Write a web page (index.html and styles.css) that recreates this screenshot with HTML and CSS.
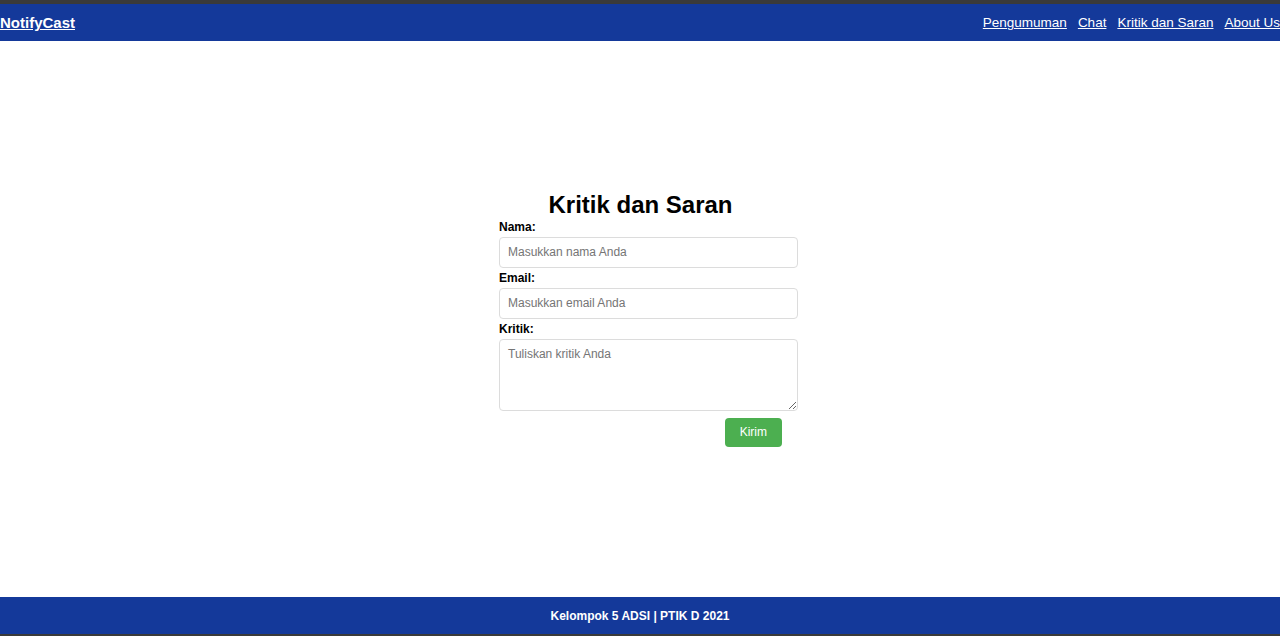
FILE: index.html
```html
<!DOCTYPE html>
<html lang="id">
<head>
<meta charset="utf-8">
<title>Kritik dan Saran - NotifyCast</title>
<link rel="stylesheet" href="styles.css">
</head>
<body>
<div class="page">
  <header class="topbar">
    <a class="brand" href="#">NotifyCast</a>
    <nav class="nav">
      <a href="#">Pengumuman</a>
      <a href="#">Chat</a>
      <a href="#">Kritik dan Saran</a>
      <a href="#">About Us</a>
    </nav>
  </header>
  <main class="main">
    <div class="form-wrap">
      <h2 class="title">Kritik dan Saran</h2>
      <form class="form">
        <label for="nama">Nama:</label>
        <input id="nama" type="text" placeholder="Masukkan nama Anda">
        <label for="email">Email:</label>
        <input id="email" type="email" placeholder="Masukkan email Anda">
        <label for="kritik">Kritik:</label>
        <textarea id="kritik" placeholder="Tuliskan kritik Anda"></textarea>
        <div class="actions"><button type="button" class="btn">Kirim</button></div>
      </form>
    </div>
  </main>
  <footer class="footer">Kelompok 5 ADSI | PTIK D 2021</footer>
</div>
</body>
</html>
```
FILE: styles.css
```css
html, body {
  margin: 0;
  padding: 0;
  height: 100%;
}
body {
  font-family: "Liberation Sans", Arial, sans-serif;
  background: #3a3a3a;
}
.page {
  box-sizing: border-box;
  height: 636px;
  padding-top: 4px;
  padding-bottom: 2px;
  display: flex;
  flex-direction: column;
  overflow: hidden;
}
.topbar {
  height: 37px;
  background: #14399a;
  display: flex;
  align-items: center;
  justify-content: space-between;
  flex-shrink: 0;
}
.brand {
  color: #fff;
  font-weight: bold;
  font-size: 15px;
}
.nav {
  display: flex;
  gap: 11px;
  margin-right: 0;
}
.nav a {
  color: #fff;
  font-size: 13.5px;
}
.main {
  flex: 1;
  background: #fff;
  display: flex;
  align-items: center;
  justify-content: center;
}
.form-wrap {
  width: 283px;
  margin-left: 1px;
  margin-top: -2px;
}
.title {
  margin: 0;
  font-size: 24px;
  line-height: 30px;
  text-align: center;
  color: #000;
}
.form {
  display: flex;
  flex-direction: column;
}
.form label {
  font-size: 12px;
  font-weight: bold;
  line-height: 14px;
  margin-bottom: 3px;
  color: #000;
}
.form input,
.form textarea {
  width: calc(100% - 2px);
  box-sizing: content-box;
  padding: 8px;
  border: 1px solid #dcdcdc;
  border-radius: 4px;
  font-family: "Liberation Sans", Arial, sans-serif;
  font-size: 12px;
  line-height: 13px;
  margin: 0 0 3px 0;
  color: #333;
}
.form textarea {
  height: 54px;
  resize: vertical;
  margin-bottom: 7px;
}
.form input::placeholder,
.form textarea::placeholder {
  color: #757575;
}
.actions {
  display: flex;
  justify-content: flex-end;
}
.btn {
  background: #4caf50;
  color: #fff;
  border: none;
  border-radius: 4px;
  padding: 8px 15px;
  font-family: "Liberation Sans", Arial, sans-serif;
  font-size: 12px;
  line-height: 13px;
}
.footer {
  height: 37px;
  background: #14399a;
  color: #fff;
  font-weight: bold;
  font-size: 12px;
  display: flex;
  align-items: center;
  justify-content: center;
  flex-shrink: 0;
}
```
